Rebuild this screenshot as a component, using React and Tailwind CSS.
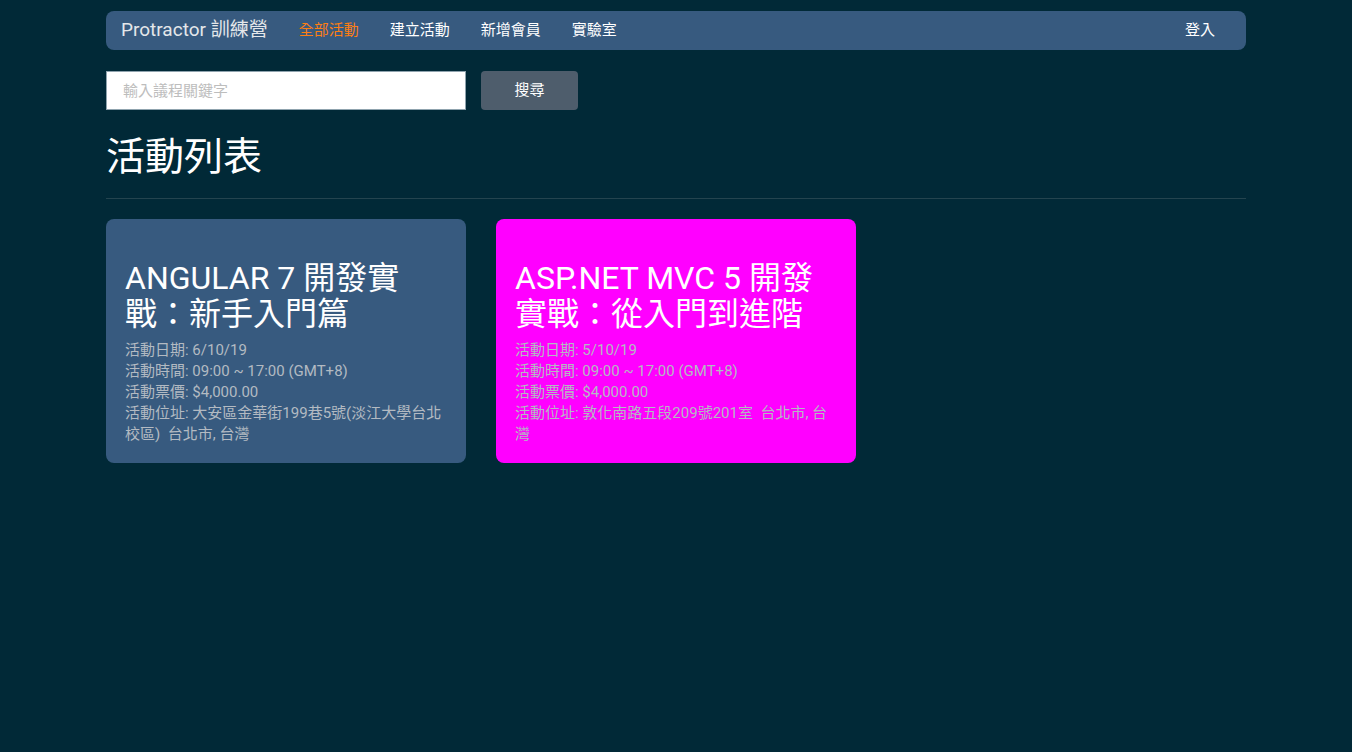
import React from 'react';

const sans = { fontFamily: 'Roboto, "Noto Sans CJK TC", sans-serif' };

const events = [
  {
    name: 'ANGULAR 7 開發實戰：新手入門篇',
    date: '6/10/19',
    time: '09:00 ~ 17:00 (GMT+8)',
    price: '$4,000.00',
    address: '大安區金華街199巷5號(淡江大學台北校區)',
    city: '台北市',
    country: '台灣',
    bg: 'bg-[#375a7f]',
  },
  {
    name: 'ASP.NET MVC 5 開發實戰：從入門到進階',
    date: '5/10/19',
    time: '09:00 ~ 17:00 (GMT+8)',
    price: '$4,000.00',
    address: '敦化南路五段209號201室',
    city: '台北市',
    country: '台灣',
    bg: 'bg-[#ff00ff]',
  },
];

const EventCard = ({ event }) => (
  <div className={`${event.bg} w-[360px] h-[244px] rounded-lg px-[19px] pt-[41px]`}>
    <h2 className="text-white text-[32px] leading-[36px] mb-[8px]">{event.name}</h2>
    <div className="text-[#b3bac2] text-[15px] leading-[21px]">
      <p>活動日期: {event.date}</p>
      <p>活動時間: {event.time}</p>
      <p>活動票價: {event.price}</p>
      <p>
        活動位址: {event.address} &nbsp;{event.city}, {event.country}
      </p>
    </div>
  </div>
);

export default function App() {
  return (
    <div className="min-h-screen bg-[#012937] pt-[11px]" style={sans}>
      <div className="w-[1140px] mx-auto">
        <nav className="h-[39px] bg-[#375a7f] rounded-lg flex items-center px-[15px] text-[15px]">
          <span className="text-[#e4e7ea] text-[19px] mr-[31px]">Protractor 訓練營</span>
          <div className="flex gap-[31px]">
            <a className="text-[#fd7e14]">全部活動</a>
            <a className="text-white">建立活動</a>
            <a className="text-white">新增會員</a>
            <a className="text-white">實驗室</a>
          </div>
          <a className="text-white ml-auto mr-[16px]">登入</a>
        </nav>

        <div className="flex gap-[15px] mt-[21px]">
          <input
            className="w-[360px] h-[39px] bg-white border border-[#8fa3ae] px-[16px] text-[15px] outline-none placeholder:text-[#bdbdbd]"
            placeholder="輸入議程關鍵字"
          />
          <button className="w-[97px] h-[39px] rounded bg-[#4e5d6c] text-white text-[15px]">搜尋</button>
        </div>

        <h1 className="text-white text-[39px] leading-[48px] mt-[23px]">活動列表</h1>
        <hr className="border-0 border-t border-[#24444f] mt-[17px]" />

        <div className="flex gap-[30px] mt-[20px]">
          {events.map((e) => (
            <EventCard key={e.name} event={e} />
          ))}
        </div>
      </div>
    </div>
  );
}
